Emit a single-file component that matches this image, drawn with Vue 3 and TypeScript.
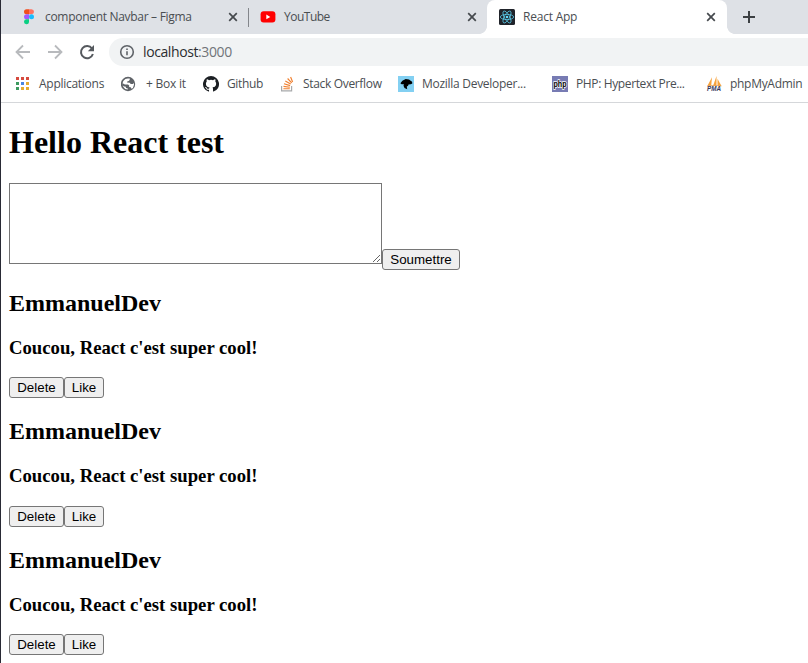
<script setup lang="ts">
import { ref } from 'vue'

interface Tab {
  id: string
  title: string
  spacing: number
  active?: boolean
}
interface Bookmark {
  id: string
  label: string
  spacing: number
}
interface Comment {
  id: number
  author: string
  body: string
}

const tabs: Tab[] = [
  { id: 'figma', title: 'component Navbar – Figma', spacing: -0.3 },
  { id: 'youtube', title: 'YouTube', spacing: -0.5 },
  { id: 'react', title: 'React App', spacing: -0.22, active: true },
]

const bookmarks: Bookmark[] = [
  { id: 'apps', label: 'Applications', spacing: -0.27 },
  { id: 'box', label: '+ Box it', spacing: -0.22 },
  { id: 'github', label: 'Github', spacing: -0.35 },
  { id: 'stack', label: 'Stack Overflow', spacing: -0.33 },
  { id: 'mdn', label: 'Mozilla Developer...', spacing: -0.28 },
  { id: 'php', label: 'PHP: Hypertext Pre...', spacing: -0.37 },
  { id: 'pma', label: 'phpMyAdmin', spacing: -0.3 },
]

const appColors = ['#d64a3e', '#d64a3e', '#d64a3e', '#3c9a5f', '#4a86e0', '#e5ab2e', '#3c9a5f', '#e5ab2e', '#e5ab2e']

const draft = ref('')
const comments = ref<Comment[]>(
  [1, 2, 3].map((id) => ({ id, author: 'EmmanuelDev', body: "Coucou, React c'est super cool!" })),
)

function remove(id: number) {
  comments.value = comments.value.filter((c) => c.id !== id)
}
</script>

<template>
  <div class="window">
    <header>
      <div class="tabs">
        <div v-for="tab in tabs" :key="tab.id" class="tab" :class="{ active: tab.active, divided: tab.id === 'figma' }">
          <svg v-if="tab.id === 'figma'" class="icon" viewBox="0 0 16 16">
            <path d="M5.5 0.2H8v5H5.5a2.5 2.5 0 0 1 0-5z" fill="#f24e1e" />
            <path d="M8 .2h2.5a2.5 2.5 0 0 1 0 5H8z" fill="#ff7262" />
            <path d="M5.5 5.2H8v5H5.5a2.5 2.5 0 0 1 0-5z" fill="#a259ff" />
            <circle cx="10.5" cy="7.7" r="2.5" fill="#1abcfe" />
            <path d="M5.5 10.2H8v2.7a2.5 2.5 0 1 1-2.5-2.7z" fill="#0acf83" />
          </svg>
          <svg v-else-if="tab.id === 'youtube'" class="icon" viewBox="0 0 16 16">
            <rect x=".6" y="2.3" width="14.8" height="11.2" rx="3" fill="#f00" />
            <path d="M6.3 5.6v4.6l4-2.3z" fill="#fff" />
          </svg>
          <svg v-else class="icon" viewBox="0 0 16 16">
            <rect width="16" height="16" rx="1.5" fill="#20232a" />
            <g fill="none" stroke="#5ccfee" stroke-width=".75">
              <ellipse cx="8" cy="8" rx="6.7" ry="2.6" />
              <ellipse cx="8" cy="8" rx="6.7" ry="2.6" transform="rotate(60 8 8)" />
              <ellipse cx="8" cy="8" rx="6.7" ry="2.6" transform="rotate(120 8 8)" />
            </g>
            <circle cx="8" cy="8" r="1.3" fill="#61dafb" />
          </svg>
          <span class="title" :style="{ letterSpacing: tab.spacing + 'px' }">{{ tab.title }}</span>
          <svg class="close" viewBox="0 0 10 10"><path d="M1.2 1.2l7.6 7.6M8.8 1.2L1.2 8.8" /></svg>
        </div>
        <svg class="plus" viewBox="0 0 12 12"><path d="M6 0v12M0 6h12" /></svg>
      </div>

      <div class="toolbar">
        <svg class="nav" viewBox="0 0 16 16"><path d="M15 8H2M8 1.5L1.5 8 8 14.5" /></svg>
        <svg class="nav" viewBox="0 0 16 16"><path d="M1 8h13M8 1.5L14.5 8 8 14.5" /></svg>
        <svg class="nav reload" viewBox="0 0 16 16">
          <path d="M13 4.5A6.1 6.1 0 1 0 13.9 10" />
          <path class="head" d="M15 1v6.2H8.8z" />
        </svg>
        <div class="omnibox">
          <svg class="info" viewBox="0 0 16 16">
            <circle cx="8" cy="8" r="6.3" />
            <path d="M8 7.2v4M8 4.4v1.5" />
          </svg>
          <span class="url">localhost<span class="port">:3000</span></span>
        </div>
      </div>

      <nav class="bookmarks">
        <div v-for="mark in bookmarks" :key="mark.id" class="bookmark">
          <svg v-if="mark.id === 'apps'" class="icon" viewBox="0 0 16 16">
            <rect
              v-for="(color, i) in appColors"
              :key="i"
              :x="1 + (i % 3) * 5"
              :y="1 + Math.floor(i / 3) * 5"
              width="3"
              height="3"
              :fill="color"
            />
          </svg>
          <svg v-else-if="mark.id === 'box'" class="icon" viewBox="0 0 16 16">
            <circle cx="7" cy="8" r="7.2" fill="#5f6368" />
            <path d="M6.8 2.4l2 .1-.1 1.5-1 .9-1.5.5-.1 1.2 2.6.2 1 1.3h2.2l1-1.2.1 1.8-1.1 3.2-1.4.8-.8-1.4-1.6-.2.1-1.6-1.2-.9H3.9L1.6 7.3l.1 1.9 1.2 1.2 1.6.1.6 1.6 1.7.5v.9l-2.6-.6-2.2-2.3-.6-2.9.9-2.6 2.1-2.2z" fill="#fff" />
          </svg>
          <svg v-else-if="mark.id === 'github'" class="icon" viewBox="0 0 16 16">
            <path fill="#1b1f23" d="M8 0a8 8 0 0 0-2.53 15.59c.4.07.55-.17.55-.38v-1.49c-2.01.37-2.53-.49-2.69-.94-.09-.23-.48-.94-.82-1.13-.28-.15-.68-.52-.01-.53.63-.01 1.08.58 1.23.82.72 1.21 1.87.87 2.33.66.07-.52.28-.87.51-1.07-1.78-.2-3.64-.89-3.64-3.95 0-.87.31-1.59.82-2.15-.08-.2-.36-1.02.08-2.12 0 0 .67-.21 2.2.82a7.6 7.6 0 0 1 4 0c1.53-1.04 2.2-.82 2.2-.82.44 1.1.16 1.92.08 2.12.51.56.82 1.27.82 2.15 0 3.07-1.87 3.75-3.65 3.95.29.25.54.73.54 1.48v2.2c0 .21.15.46.55.38A8 8 0 0 0 8 0z" />
          </svg>
          <svg v-else-if="mark.id === 'stack'" class="icon" viewBox="0 0 16 16">
            <path d="M2.6 10v4.8h10V10" fill="none" stroke="#a8a9ab" stroke-width="1.2" />
            <path d="M4.4 12.7h6.4M4.5 10.4l6.3.8M5 7.8l6.1 1.8M6.3 5l5.4 3.1M8.6 2.5l4.1 4.4M11.6 1l2 5" fill="none" stroke="#f08030" stroke-width="1.15" />
          </svg>
          <svg v-else-if="mark.id === 'mdn'" class="icon" viewBox="0 0 16 16">
            <rect width="16" height="16" fill="#83d0f2" />
            <path d="M2.4 7.2l2-2.5 3.3-1.8 3.3.5 1.3 1.2 1.8 1.1.2 1.8-1.6.8-2.2.3-.4 1.2-1.3.8.4 2.6-2.7-1.2-1-2.2.4-1.5-2.3-.1z" fill="#000" />
          </svg>
          <svg v-else-if="mark.id === 'php'" class="icon" viewBox="0 0 16 16">
            <rect width="16" height="16" fill="#777bb3" />
            <text x="8" y="11" class="php" textLength="13" lengthAdjust="spacingAndGlyphs">php</text>
          </svg>
          <svg v-else class="icon" viewBox="0 0 16 16">
            <path d="M6 1.2L5.2 9.8 1.3 10zM10.5 0L7 10h3.5zM11.5 2.8l4 7.2h-4z" fill="#f7a23c" />
            <path d="M1 10.3c5-1.2 9-1.2 14.3-.2" fill="none" stroke="#e5a35d" stroke-width=".8" />
            <text x="8" y="15.2" class="pma" textLength="14" lengthAdjust="spacingAndGlyphs">PMA</text>
          </svg>
          <span :style="{ letterSpacing: mark.spacing + 'px' }">{{ mark.label }}</span>
        </div>
      </nav>
    </header>

    <main>
      <h1>Hello React test</h1>
      <form @submit.prevent>
        <textarea v-model="draft"></textarea><button type="submit">Soumettre</button>
      </form>
      <article v-for="comment in comments" :key="comment.id">
        <h2>{{ comment.author }}</h2>
        <h3>{{ comment.body }}</h3>
        <div class="actions">
          <button type="button" @click="remove(comment.id)">Delete</button><button type="button">Like</button>
        </div>
      </article>
    </main>
    <i class="speck"></i>
  </div>
</template>

<style>
body {
  margin: 0;
  overflow: hidden;
}
</style>

<style scoped>
.window {
  position: relative;
  box-sizing: border-box;
  width: 808px;
  height: 663px;
  overflow: hidden;
  border-left: 1px solid #292a35;
  background: #fff;
  color: #000;
}
header {
  font: 12px/16px 'Open Sans', 'Noto Sans', sans-serif;
  color: #4a4e52;
  border-bottom: 1px solid #d5d7da;
  white-space: nowrap;
}
.icon {
  width: 16px;
  height: 16px;
  flex: none;
}
.tabs {
  display: flex;
  height: 34px;
  padding-left: 8px;
  background: #dee1e6;
}
.tab {
  position: relative;
  box-sizing: border-box;
  display: flex;
  align-items: center;
  width: 239px;
  padding: 0 10px 0 12px;
  gap: 8px;
}
.tab.divided::after {
  content: '';
  position: absolute;
  right: -1px;
  top: 8px;
  width: 1px;
  height: 19px;
  background: #83868b;
}
.tab.active {
  width: 240px;
  padding-right: 11px;
  background: #fff;
  border-radius: 8px 8px 0 0;
}
.tab.active::before,
.tab.active::after {
  content: '';
  position: absolute;
  bottom: 0;
  width: 8px;
  height: 8px;
}
.tab.active::before {
  left: -8px;
  background: radial-gradient(circle at 0 0, #dee1e6 7.6px, #fff 8.2px);
}
.tab.active::after {
  right: -8px;
  background: radial-gradient(circle at 100% 0, #dee1e6 7.6px, #fff 8.2px);
}
.title {
  flex: 1;
}
.close {
  width: 10px;
  height: 10px;
  stroke: #45494d;
  stroke-width: 1.7;
}
.plus {
  width: 12px;
  height: 12px;
  margin: 11px 0 0 16px;
  stroke: #3c4043;
  stroke-width: 2;
}
.toolbar {
  display: flex;
  align-items: center;
  height: 36px;
  padding-left: 14px;
}
.nav {
  width: 16px;
  height: 16px;
  margin-right: 16px;
  fill: none;
  stroke: #b8babd;
  stroke-width: 1.8;
}
.nav.reload {
  margin-right: 14px;
  stroke: #55595e;
  stroke-width: 2;
}
.reload .head {
  fill: #55595e;
  stroke: none;
}
.omnibox {
  box-sizing: border-box;
  display: flex;
  align-items: center;
  flex: 1;
  height: 28px;
  padding-left: 10px;
  gap: 8px;
  border-radius: 14px 0 0 14px;
  background: #f1f3f4;
}
.info {
  width: 16px;
  height: 16px;
  fill: none;
  stroke: #5f6368;
  stroke-width: 1.6;
}
.url {
  font-size: 14px;
  letter-spacing: -0.4px;
  color: #2b2d30;
}
.port {
  color: #707479;
}
.bookmarks {
  display: grid;
  grid-template-columns: 106px 82px 76px 119px 154px 154px 100px;
  height: 32px;
  padding-left: 14px;
}
.bookmark {
  display: flex;
  align-items: center;
  gap: 8px;
  padding-bottom: 4px;
}
.bookmark:nth-child(2) {
  gap: 9px;
}
.php {
  font: bold 9px 'Liberation Sans', sans-serif;
  text-anchor: middle;
  fill: #000;
  stroke: #fff;
  stroke-width: 1.4;
  paint-order: stroke;
}
.pma {
  font: italic bold 6.5px 'Liberation Sans', sans-serif;
  text-anchor: middle;
  fill: #34365c;
}
main {
  padding: 0 8px;
  font-family: 'Liberation Serif', 'Times New Roman', serif;
  display: flow-root;
}
h1 {
  margin: 21.44px 0;
  font-size: 32px;
  line-height: 37px;
}
h2 {
  margin: 19.92px 0;
  font-size: 24px;
  line-height: 27px;
}
h3 {
  margin: 18.72px 0;
  font-size: 18.72px;
  line-height: 22px;
}
form {
  display: flex;
  align-items: flex-end;
  height: 87px;
}
textarea {
  box-sizing: border-box;
  width: 373px;
  height: 81px;
  margin: 0 0 6px;
  padding: 2px;
  border: 1px solid #767676;
  border-radius: 0;
}
button {
  box-sizing: border-box;
  height: 21px;
  margin: 0;
  padding: 1px 6px;
  border: 1px solid #767676;
  border-radius: 3px;
  background: #efefef;
  color: #000;
  font: 13.333px/15px 'Liberation Sans', Arial, sans-serif;
}
form button {
  width: 78px;
}
.actions {
  display: flex;
  height: 21px;
}
.actions button:first-child {
  width: 55px;
}
.actions button:last-child {
  width: 40px;
}
.speck {
  position: absolute;
  left: -1px;
  top: 263px;
  width: 1px;
  height: 2px;
  background: #b5a65a;
}
</style>
